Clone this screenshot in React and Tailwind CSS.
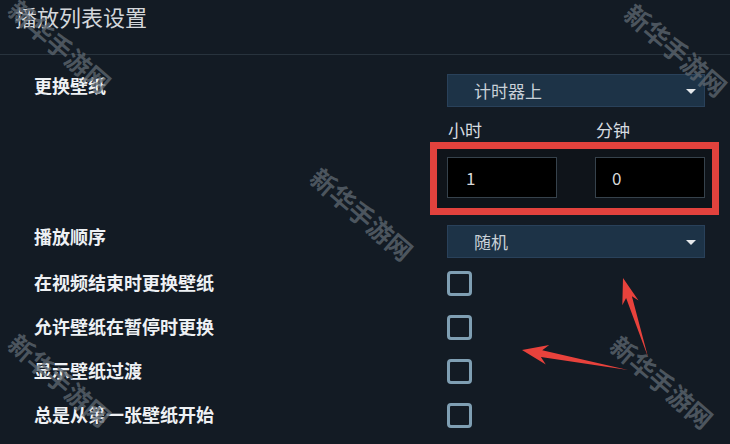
const font = { fontFamily: '"Noto Sans CJK SC", "Noto Sans", sans-serif' };

const checkRows = [
  "在视频结束时更换壁纸",
  "允许壁纸在暂停时更换",
  "显示壁纸过渡",
  "总是从第一张壁纸开始",
];

const marks = [
  "left-[60px] top-[46px]",
  "left-[676px] top-[50px]",
  "left-[362px] top-[214px]",
  "left-[60px] top-[380px]",
  "left-[662px] top-[382px]",
];

function Select({ value }) {
  return (
    <div className="relative w-[258px] h-[33px] bg-[#1d3347] border border-[#29415a] flex items-center pl-[26px] text-[17px] text-[#c9d1d8]">
      {value}
      <span className="absolute right-[8px] top-[14px] w-0 h-0 border-l-[5px] border-r-[5px] border-t-[5px] border-l-transparent border-r-transparent border-t-[#e6e9ec]" />
    </div>
  );
}

function Label({ children, lift }) {
  return (
    <div
      className={`w-[447px] pl-[34px] text-[18px] leading-[25px] font-bold text-[#eef1f4] ${
        lift ? "-translate-y-[5px]" : "-translate-y-[1px]"
      }`}
    >
      {children}
    </div>
  );
}

export default function App() {
  return (
    <div className="relative w-[730px] h-[444px] overflow-hidden bg-[#131b24]" style={font}>
      <div className="h-[55px] border-b border-[#28333d] px-[15px] pt-[1px] text-[22px] leading-[30px] text-[#d3d7db]">
        播放列表设置
      </div>

      <div className="flex flex-col">
        <div className="flex items-center mt-[19px]">
          <Label lift>更换壁纸</Label>
          <Select value="计时器上" />
        </div>

        <div className="flex mt-[13px] h-[20px] leading-[20px] text-[17px] text-[#d6dbe0]">
          <div className="w-[448px]" />
          <div className="w-[148px]">小时</div>
          <div>分钟</div>
        </div>

        <div className="flex mt-[2px]">
          <div className="w-[430px]" />
          <div className="w-[289px] h-[73px] border-[7px] border-[#e2423d] bg-[#0f141a] flex pl-[10px] pt-[8px] gap-[38px]">
            <div className="w-[110px] h-[41px] bg-black border border-[#36424c] flex items-center pl-[18px] text-[17px] text-[#d8d8d8]">1</div>
            <div className="w-[110px] h-[41px] bg-black border border-[#36424c] flex items-center pl-[16px] text-[17px] text-[#d8d8d8]">0</div>
          </div>
        </div>

        <div className="flex items-center mt-[10px]">
          <Label lift>播放顺序</Label>
          <Select value="随机" />
        </div>

        <div className="flex flex-col gap-[19px] mt-[13px]">
          {checkRows.map((t) => (
            <div key={t} className="flex items-center h-[25px]">
              <Label>{t}</Label>
              <div className="w-[25px] h-[25px] border-[3px] border-[#7f9fb3] rounded-[4px]" />
            </div>
          ))}
        </div>
      </div>

      {marks.map((m) => (
        <span
          key={m}
          className={`absolute ${m} -translate-x-1/2 -translate-y-1/2 rotate-[41deg] whitespace-nowrap text-[25px] font-bold text-[#5c666f]/80 pointer-events-none`}
        >
          新华手游网
        </span>
      ))}

      <svg className="absolute inset-0 pointer-events-none" width="730" height="444" viewBox="0 0 730 444">
        <polygon fill="#e8423c" points="522,350 549.2,345 542.2,350.3 628,370 540.9,357.1 545.8,364.6" />
        <polygon fill="#e8423c" points="623,278 638.5,300.4 631.9,296.2 648,357 626.1,298 622.3,305.2" />
      </svg>
    </div>
  );
}
